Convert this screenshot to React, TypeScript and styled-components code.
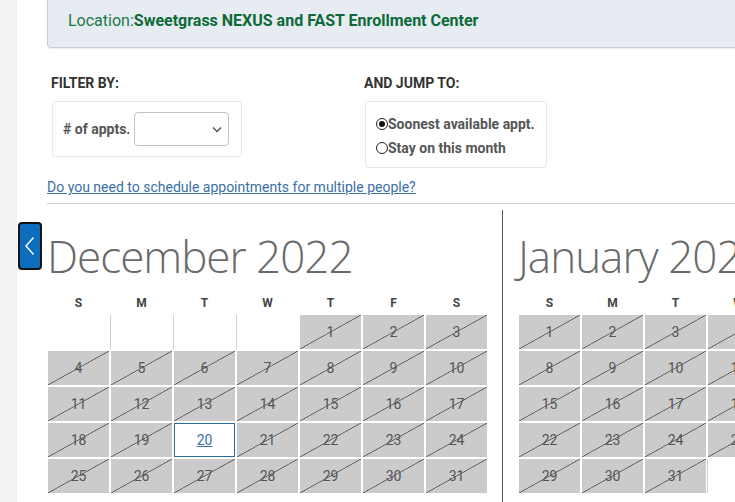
import React from 'react';
import styled, { createGlobalStyle } from 'styled-components';

const GlobalStyle = createGlobalStyle`
  html, body {
    margin: 0;
    padding: 0;
    background: #fff;
    overflow: hidden;
  }
  body {
    font-family: Roboto, "Liberation Sans", Arial, sans-serif;
    color: #333;
  }
  * {
    box-sizing: border-box;
  }
`;

const CELL_W = 61;
const CELL_H = 34;
const GAP = 2;

const Page = styled.div`
  display: flex;
  min-height: 502px;
`;

const SideStrip = styled.div`
  width: 17px;
  flex-shrink: 0;
  background: #f2f2f2;
`;

const Main = styled.div`
  width: 960px;
  flex-shrink: 0;
  padding-left: 30px;
`;

const LocationBox = styled.div`
  margin-top: -8px;
  height: 56px;
  display: flex;
  align-items: center;
  padding-left: 20px;
  background: #e6ecf1;
  border: 1px solid #c7cfd6;
  border-radius: 4px;
  box-shadow: 0 1px 1px rgba(0, 0, 0, 0.08);
  font-size: 16px;
  color: #23784a;
`;

const LocationName = styled.span`
  font-weight: 700;
  color: #0d6a38;
`;

const FilterRow = styled.div`
  display: flex;
  margin-top: 27px;
`;

const FilterColumn = styled.div<{ $width: number }>`
  width: ${p => p.$width}px;
  padding-left: 4px;
`;

const FilterLabel = styled.div`
  font-size: 14px;
  font-weight: 700;
  line-height: 16px;
  color: #333;
  margin-bottom: 10px;
`;

const OptionBox = styled.div<{ $width: number; $height: number }>`
  margin-left: 1px;
  width: ${p => p.$width}px;
  height: ${p => p.$height}px;
  border: 1px solid #e9e9e9;
  border-radius: 3px;
  padding-left: 10px;
`;

const ApptsRow = styled.div`
  display: flex;
  align-items: center;
  height: 100%;
  gap: 4px;
`;

const FieldLabel = styled.span`
  font-size: 14px;
  font-weight: 700;
  color: #555;
`;

const SelectBox = styled.div`
  position: relative;
  width: 95px;
  height: 34px;
  border: 1px solid #c4c4c4;
  border-radius: 4px;
  background: #fff;
`;

const SelectChevron = styled.svg`
  position: absolute;
  right: 6px;
  top: 13px;
`;

const RadioList = styled.div`
  display: flex;
  flex-direction: column;
  padding-top: 10px;
`;

const RadioRow = styled.label`
  display: flex;
  align-items: center;
  height: 24px;
  font-size: 14px;
  font-weight: 700;
  color: #555;
`;

const RadioCircle = styled.span<{ $checked?: boolean }>`
  width: 12px;
  height: 12px;
  border-radius: 50%;
  border: 1px solid #222;
  background: #fff;
  display: flex;
  align-items: center;
  justify-content: center;

  &::after {
    content: '';
    width: 6px;
    height: 6px;
    border-radius: 50%;
    background: ${p => (p.$checked ? '#111' : 'transparent')};
  }
`;

const MultiLink = styled.a`
  display: block;
  margin-top: 11px;
  font-size: 14px;
  line-height: 16px;
  color: #3a70a4;
  text-decoration: underline;
  cursor: pointer;
`;

const Rule = styled.hr`
  margin: 8px 0 0;
  border: 0;
  border-top: 1px solid #cfcfcf;
`;

const Calendars = styled.div`
  display: flex;
  margin-top: 6px;
`;

const MonthPanel = styled.div<{ $divider?: boolean }>`
  position: relative;
  padding: 0 15px 10px ${p => (p.$divider ? 15 : 0)}px;
  border-left: ${p => (p.$divider ? '1px solid #555' : 'none')};
`;

const PrevButton = styled.button`
  position: absolute;
  left: -29px;
  top: 12px;
  width: 24px;
  height: 48px;
  padding: 0;
  border: 2px solid #111;
  border-radius: 4px;
  background: #0b6dbb;
  display: flex;
  align-items: center;
  justify-content: center;
  cursor: pointer;
`;

const MonthTitle = styled.h2`
  margin: 0 0 6px;
  padding-top: 17px;
  font-family: "Open Sans", Lato, sans-serif;
  font-weight: 300;
  font-size: 44px;
  letter-spacing: -1px;
  line-height: 58px;
  color: #6a6a6a;
  white-space: nowrap;
`;

const DayGrid = styled.div`
  display: grid;
  grid-template-columns: repeat(7, ${CELL_W}px);
  column-gap: ${GAP}px;
  row-gap: ${GAP}px;
  margin-left: 1px;
`;

const DayName = styled.div`
  height: 24px;
  display: flex;
  align-items: center;
  justify-content: center;
  font-size: 12px;
  font-weight: 700;
  color: #444;
`;

const DayCell = styled.div<{ $kind: 'off' | 'empty' | 'open' }>`
  height: ${CELL_H}px;
  display: flex;
  align-items: center;
  justify-content: center;
  font-size: 14px;
  color: #555;
  background: ${p =>
    p.$kind === 'off'
      ? 'linear-gradient(to bottom right, transparent calc(50% - 0.7px), #4a4a4a 50%, transparent calc(50% + 0.7px)), #cbcbcb'
      : '#fff'};
  border: ${p => (p.$kind === 'open' ? '1px solid #2b6a96' : 'none')};
  box-shadow: ${p => (p.$kind === 'empty' ? '-1px 0 0 0 #cfcfcf' : 'none')};

  &:nth-child(7n + 1) {
    box-shadow: none;
  }
`;

const OpenLink = styled.a`
  color: #3a70a4;
  text-decoration: underline;
`;

const DAY_NAMES = ['S', 'M', 'T', 'W', 'T', 'F', 'S'];

interface MonthProps {
  title: string;
  offset: number;
  days: number;
  open?: number[];
  divider?: boolean;
  withPrev?: boolean;
}

const Month = ({ title, offset, days, open = [], divider, withPrev }: MonthProps) => {
  const total = Math.ceil((offset + days) / 7) * 7;
  const cells = Array.from({ length: total }, (_, i) => {
    const day = i - offset + 1;
    return day >= 1 && day <= days ? day : null;
  });

  return (
    <MonthPanel $divider={divider}>
      {withPrev && (
        <PrevButton aria-label="Previous month">
          <svg width="12" height="20" viewBox="0 0 12 20">
            <path d="M9.5 1.5 L2 10 L9.5 18.5" fill="none" stroke="#fff" strokeWidth="1.4" />
          </svg>
        </PrevButton>
      )}
      <MonthTitle>{title}</MonthTitle>
      <DayGrid>
        {DAY_NAMES.map((name, i) => (
          <DayName key={`n${i}`}>{name}</DayName>
        ))}
      </DayGrid>
      <DayGrid>
        {cells.map((day, i) => {
          if (day === null) return <DayCell key={i} $kind="empty" />;
          if (open.includes(day))
            return (
              <DayCell key={i} $kind="open">
                <OpenLink>{day}</OpenLink>
              </DayCell>
            );
          return (
            <DayCell key={i} $kind="off">
              {day}
            </DayCell>
          );
        })}
      </DayGrid>
    </MonthPanel>
  );
};

const App = () => (
  <>
    <GlobalStyle />
    <Page>
      <SideStrip />
      <Main>
        <LocationBox>
          Location:<LocationName>Sweetgrass NEXUS and FAST Enrollment Center</LocationName>
        </LocationBox>

        <FilterRow>
          <FilterColumn $width={313}>
            <FilterLabel>FILTER BY:</FilterLabel>
            <OptionBox $width={190} $height={56}>
              <ApptsRow>
                <FieldLabel># of appts.</FieldLabel>
                <SelectBox>
                  <SelectChevron width="10" height="7" viewBox="0 0 10 7">
                    <path d="M1 1.5 L5 5.5 L9 1.5" fill="none" stroke="#555" strokeWidth="1.5" />
                  </SelectChevron>
                </SelectBox>
              </ApptsRow>
            </OptionBox>
          </FilterColumn>
          <FilterColumn $width={300}>
            <FilterLabel>AND JUMP TO:</FilterLabel>
            <OptionBox $width={182} $height={67}>
              <RadioList>
                <RadioRow>
                  <RadioCircle $checked />
                  Soonest available appt.
                </RadioRow>
                <RadioRow>
                  <RadioCircle />
                  Stay on this month
                </RadioRow>
              </RadioList>
            </OptionBox>
          </FilterColumn>
        </FilterRow>

        <MultiLink>Do you need to schedule appointments for multiple people?</MultiLink>
        <Rule />

        <Calendars>
          <Month title="December 2022" offset={4} days={31} open={[20]} withPrev />
          <Month title="January 2023" offset={0} days={31} divider />
        </Calendars>
      </Main>
    </Page>
  </>
);

export default App;
